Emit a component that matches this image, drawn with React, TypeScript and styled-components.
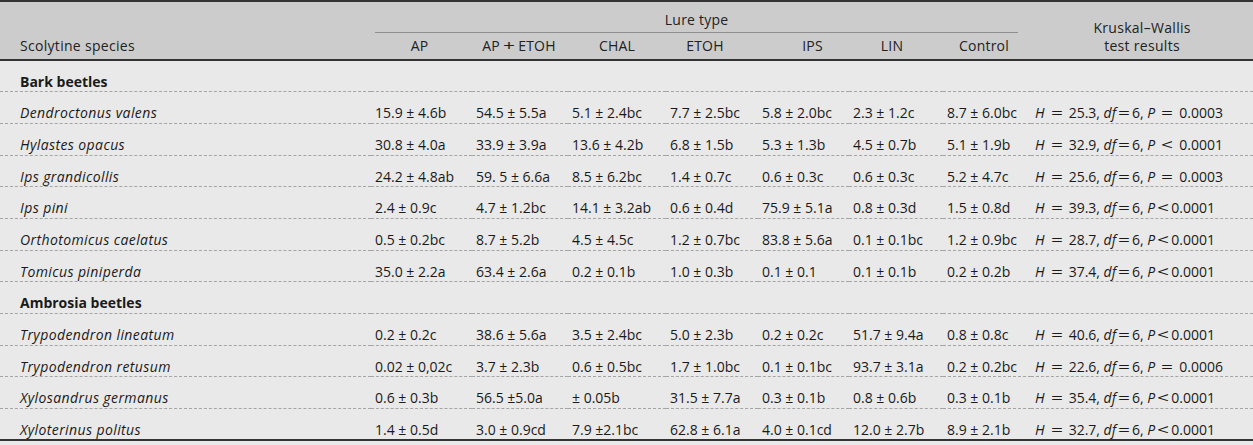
import React from "react";
import styled, { createGlobalStyle } from "styled-components";

const GlobalStyle = createGlobalStyle`
  html, body {
    margin: 0;
    padding: 0;
    background: #e9e9e9;
  }
  body {
    font-family: "Open Sans", "Noto Sans", sans-serif;
    color: #1a1a1a;
  }
`;

type Row = { name: string; values: string[]; stats: [string, string, string, number] };
type Group = { title: string; rows: Row[] };

// label + how far its centre sits off the column centre in the reference
const lures: [string, number][] = [
  ["AP", -2],
  ["AP + ETOH", -1],
  ["CHAL", 0],
  ["ETOH", -7],
  ["IPS", 9],
  ["LIN", -4],
  ["Control", -3],
];

// column widths measured off the reference
const colWidths = [371, 101, 96, 98, 92, 91, 94, 88, 222];

const groups: Group[] = [
  {
    title: "Bark beetles",
    rows: [
      { name: "Dendroctonus valens", values: ["15.9 ± 4.6b", "54.5 ± 5.5a", "5.1 ± 2.4bc", "7.7 ± 2.5bc", "5.8 ± 2.0bc", "2.3 ± 1.2c", "8.7 ± 6.0bc"], stats: ["25.3", "=", "0.0003", 6] },
      { name: "Hylastes opacus", values: ["30.8 ± 4.0a", "33.9 ± 3.9a", "13.6 ± 4.2b", "6.8 ± 1.5b", "5.3 ± 1.3b", "4.5 ± 0.7b", "5.1 ± 1.9b"], stats: ["32.9", "<", "0.0001", 6] },
      { name: "Ips grandicollis", values: ["24.2 ± 4.8ab", "59. 5 ± 6.6a", "8.5 ± 6.2bc", "1.4 ± 0.7c", "0.6 ± 0.3c", "0.6 ± 0.3c", "5.2 ± 4.7c"], stats: ["25.6", "=", "0.0003", 6] },
      { name: "Ips pini", values: ["2.4 ± 0.9c", "4.7 ± 1.2bc", "14.1 ± 3.2ab", "0.6 ± 0.4d", "75.9 ± 5.1a", "0.8 ± 0.3d", "1.5 ± 0.8d"], stats: ["39.3", "<", "0.0001", 2] },
      { name: "Orthotomicus caelatus", values: ["0.5 ± 0.2bc", "8.7 ± 5.2b", "4.5 ± 4.5c", "1.2 ± 0.7bc", "83.8 ± 5.6a", "0.1 ± 0.1bc", "1.2 ± 0.9bc"], stats: ["28.7", "<", "0.0001", 2] },
      { name: "Tomicus piniperda", values: ["35.0 ± 2.2a", "63.4 ± 2.6a", "0.2 ± 0.1b", "1.0 ± 0.3b", "0.1 ± 0.1", "0.1 ± 0.1b", "0.2 ± 0.2b"], stats: ["37.4", "<", "0.0001", 2] },
    ],
  },
  {
    title: "Ambrosia beetles",
    rows: [
      { name: "Trypodendron lineatum", values: ["0.2 ± 0.2c", "38.6 ± 5.6a", "3.5 ± 2.4bc", "5.0 ± 2.3b", "0.2 ± 0.2c", "51.7 ± 9.4a", "0.8 ± 0.8c"], stats: ["40.6", "<", "0.0001", 2] },
      { name: "Trypodendron retusum", values: ["0.02 ± 0,02c", "3.7 ± 2.3b", "0.6 ± 0.5bc", "1.7 ± 1.0bc", "0.1 ± 0.1bc", "93.7 ± 3.1a", "0.2 ± 0.2bc"], stats: ["22.6", "=", "0.0006", 6] },
      { name: "Xylosandrus germanus", values: ["0.6 ± 0.3b", "56.5 ±5.0a", "± 0.05b", "31.5 ± 7.7a", "0.3 ± 0.1b", "0.8 ± 0.6b", "0.3 ± 0.1b"], stats: ["35.4", "<", "0.0001", 2] },
      { name: "Xyloterinus politus", values: ["1.4 ± 0.5d", "3.0 ± 0.9cd", "7.9 ±2.1bc", "62.8 ± 6.1a", "4.0 ± 0.1cd", "12.0 ± 2.7b", "8.9 ± 2.1b"], stats: ["32.7", "<", "0.0001", 2] },
    ],
  },
];

const App: React.FC = () => {
  const renderStats = ([h, op, p, gap]: Row["stats"]) => (
    <>
      <Var>H</Var>
      <Op $gap={6}>=</Op>
      {h}, <Var>df</Var>
      <Op $gap={2}>=</Op>6, <Var>P</Var>
      <Op $gap={gap}>{op}</Op>
      {p}
    </>
  );

  const renderLure = (label: string) => {
    const parts = label.split(" + ");
    if (parts.length < 2) return label;
    return (
      <>
        {parts[0]}
        <Op $gap={3}>+</Op>
        {parts[1]}
      </>
    );
  };

  return (
    <>
      <GlobalStyle />
      <Table>
        <colgroup>
          {colWidths.map((w, i) => (
            <col key={i} style={{ width: w }} />
          ))}
        </colgroup>
        <Head>
          <HeadRow $h={32}>
            <HeadCell rowSpan={2} $align="left">
              Scolytine species
            </HeadCell>
            <SpanCell colSpan={7}>
              <SpanLabel>Lure type</SpanLabel>
            </SpanCell>
            <HeadCell rowSpan={2}>
              Kruskal–Wallis
              <br />
              test results
            </HeadCell>
          </HeadRow>
          <HeadRow $h={27}>
            {lures.map(([l, n]) => (
              <SubCell key={l} $nudge={n}>
                {renderLure(l)}
              </SubCell>
            ))}
          </HeadRow>
        </Head>
        <tbody>
          {groups.map((g, gi) => (
            <React.Fragment key={g.title}>
              <BodyRow $last={false}>
                <GroupCell colSpan={9}>{g.title}</GroupCell>
              </BodyRow>
              {g.rows.map((r, ri) => (
                <BodyRow key={r.name} $last={gi === groups.length - 1 && ri === g.rows.length - 1}>
                  <NameCell>{r.name}</NameCell>
                  {r.values.map((v, vi) => (
                    <Cell key={vi}>{v}</Cell>
                  ))}
                  <Cell>{renderStats(r.stats)}</Cell>
                </BodyRow>
              ))}
            </React.Fragment>
          ))}
        </tbody>
      </Table>
    </>
  );
};

export default App;

const Table = styled.table`
  width: 1253px;
  table-layout: fixed;
  border-collapse: collapse;
  font-size: 14px;
  border-bottom: 2px solid #333;
`;

const Head = styled.thead`
  background: #cccccc;
  border-top: 2px solid #333;
  border-bottom: 2px solid #333;
  color: #222;
`;

const HeadRow = styled.tr<{ $h: number }>`
  height: ${(p) => p.$h}px;
`;

const HeadCell = styled.th<{ $align?: string }>`
  font-weight: normal;
  text-align: ${(p) => p.$align || "center"};
  vertical-align: bottom;
  padding: 0 0 4px ${(p) => (p.$align === "left" ? "20px" : "0")};
  line-height: 18px;
  letter-spacing: 0.3px;
`;

const SpanCell = styled.th`
  font-weight: normal;
  padding: 0 13px 0 4px;
  vertical-align: bottom;
`;

const SpanLabel = styled.div`
  border-bottom: 1px solid #8f8f8f;
  line-height: 18px;
  padding-bottom: 3px;
  text-align: center;
  letter-spacing: 0.2px;
`;

const SubCell = styled.th<{ $nudge: number }>`
  font-weight: normal;
  padding: 0 ${(p) => 2 * Math.max(-p.$nudge, 0)}px 4px ${(p) => 2 * Math.max(p.$nudge, 0)}px;
  vertical-align: bottom;
  line-height: 18px;
  white-space: nowrap;
  letter-spacing: 0.2px;
`;

const BodyRow = styled.tr<{ $last: boolean }>`
  height: 31.7px;
  border-bottom: ${(p) => (p.$last ? "none" : "1px dashed #a5a5a5")};
`;

const BodyCell = styled.td`
  vertical-align: top;
  padding: 11px 0 0 4px;
  line-height: 19px;
  white-space: nowrap;
`;

const GroupCell = styled(BodyCell)`
  font-weight: bold;
  padding-left: 20px;
`;

const NameCell = styled(BodyCell)`
  font-style: italic;
  padding-left: 20px;
  letter-spacing: 0.4px;
`;

const Cell = styled(BodyCell)``;

const Var = styled.i`
  font-style: italic;
`;

// math operators in the reference are set wider than the text font's glyphs
const Op = styled.span<{ $gap: number }>`
  display: inline-block;
  margin: 0 ${(p) => p.$gap + 2}px;
  transform: scaleX(1.5);
`;
